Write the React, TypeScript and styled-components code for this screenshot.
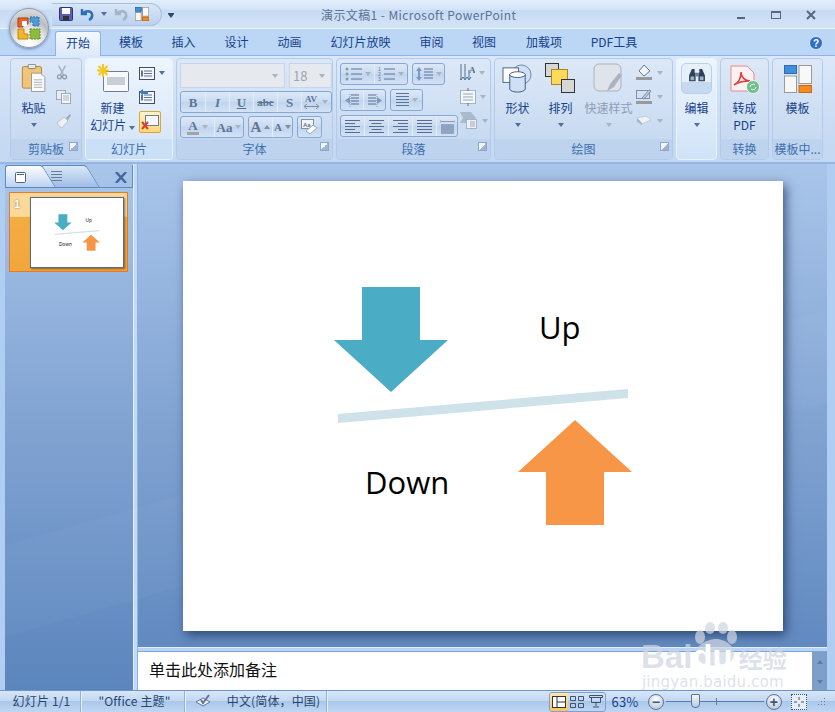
import React from "react";
import styled, { createGlobalStyle } from "styled-components";

const GlobalStyle = createGlobalStyle`
	html, body { margin: 0; padding: 0; background: #5b85bd; }
	* { box-sizing: border-box; }
`;

const INK = "#15428b";
const LABEL = "#3f6fae";
const FONT = `"Noto Sans CJK SC", "Noto Sans", sans-serif`;

const Window = styled.div`
	position: relative;
	width: 835px;
	height: 712px;
	overflow: hidden;
	display: flex;
	flex-direction: column;
	font: 12px/16px ${FONT};
	color: ${INK};
	background: #5b85bd;
`;

/* title bar */
const TitleBar = styled.div`
	flex: none;
	height: 29px;
	display: flex;
	align-items: center;
	padding: 2px 0 0 52px;
	border-bottom: 1px solid #eaf3fd;
	background: linear-gradient(#e3eefc 0, #d3e3f7 35%, #c6daf3 36%, #d5e5f8 100%);
`;
const Qat = styled.div`
	width: 110px;
	height: 23px;
	margin-top: -2px;
	display: flex;
	align-items: center;
	gap: 7px;
	padding-left: 7px;
	border-radius: 0 12px 12px 0;
	border: 1px solid #a9c0de;
	border-left: 0;
	background: linear-gradient(#d8e6f8, #bcd2ee);
`;
const QatMore = styled.span`
	width: 6px;
	margin-left: 6px;
	display: flex;
	flex-direction: column;
	gap: 1px;
	border-top: 1px solid #2f4a70;
`;
const TitleText = styled.div`
	flex: 1;
	padding-left: 147px;
	color: #5a7396;
	font-size: 12px;
	letter-spacing: 0.4px;
`;
const WinButtons = styled.div`
	display: flex;
	align-items: center;
	width: 99px;
	gap: 25px;
`;
const Orb = styled.div`
	position: absolute;
	left: 9px;
	top: 8px;
	width: 40px;
	height: 40px;
	border-radius: 50%;
	display: flex;
	align-items: center;
	justify-content: center;
	border: 1px solid #8e9bb0;
	box-shadow: 0 1px 3px rgba(40, 70, 120, 0.55);
	background: radial-gradient(circle at 50% 90%, #ffffff 0, #e6e6e6 40%, #b9bcc1 60%, #eceef0 100%);
`;

/* tabs */
const TabRow = styled.div`
	flex: none;
	height: 27px;
	padding-left: 55px;
	display: flex;
	align-items: flex-end;
	background: #bcd6f6;
	border-bottom: 1px solid #8db2e3;
`;
const Tab = styled.div<{ $w: number; $active?: boolean }>`
	width: ${p => p.$w}px;
	height: 25px;
	margin-bottom: -1px;
	text-align: center;
	line-height: 22px;
	font-size: 12px;
	color: ${INK};
	border-radius: 3px 3px 0 0;
	${p =>
		p.$active &&
		`border: 1px solid #8db2e3; border-bottom: 0; background: linear-gradient(#f3f8fe, #dde9f8);`}
`;
const Help = styled.span`
	margin: 0 0 5px auto;
	padding-right: 12px;
	display: flex;
`;

/* ribbon */
const Ribbon = styled.div`
	flex: none;
	height: 108px;
	display: flex;
	gap: 3px;
	padding: 2px 0 0 10px;
	background: linear-gradient(#dbe8f9, #c8dbf3 70%, #c3d8f2);
	border-bottom: 2px solid #96b6e0;
`;
const Group = styled.div<{ $w: number; $light?: boolean }>`
	width: ${p => p.$w}px;
	height: 102px;
	flex: none;
	display: flex;
	flex-direction: column;
	border: 1px solid ${p => (p.$light ? "#e9f3fe" : "#b3cbe8")};
	border-radius: 4px;
	overflow: hidden;
	background: ${p =>
		p.$light
			? "linear-gradient(#eef5fd, #d9e8f9 75%, #cfe3f7)"
			: "linear-gradient(#dce8f7, #c8daf1 80%)"};
`;
const GroupBody = styled.div`
	flex: 1;
	min-height: 0;
	display: flex;
`;
const GroupLabel = styled.div<{ $light?: boolean }>`
	flex: none;
	height: 20px;
	position: relative;
	text-align: center;
	line-height: 19px;
	color: ${LABEL};
	background: ${p => (p.$light ? "#c9e0f7" : "#bdd3ee")};
`;
const Launcher = styled.span`
	position: absolute;
	right: 3px;
	top: 3px;
	width: 9px;
	height: 9px;
	border: 1px solid #8ea8c9;
	background: linear-gradient(135deg, #f1f6fc 50%, #9db4d2 50%);
`;
const BigButton = styled.div<{ $w: number; $disabled?: boolean }>`
	width: ${p => p.$w}px;
	flex: none;
	display: flex;
	flex-direction: column;
	align-items: center;
	padding-top: 3px;
	color: ${p => (p.$disabled ? "#8d9db3" : INK)};
`;
const BigIcon = styled.div`
	height: 33px;
	display: flex;
	align-items: center;
	justify-content: center;
	margin-bottom: 4px;
`;
const EditBox = styled.div`
	width: 31px;
	height: 31px;
	display: flex;
	justify-content: center;
	padding-top: 5px;
	border: 1px solid #b9d0ea;
	border-radius: 5px;
	background: linear-gradient(#e6f0fb 0 62%, #c5d9f0 63%);
`;
const BigLine = styled.div`
	height: 17px;
	line-height: 17px;
	white-space: nowrap;
`;
const Caret = styled.span<{ $c?: string; $up?: boolean }>`
	display: inline-block;
	width: 0;
	height: 0;
	border: 3px solid transparent;
	${p =>
		p.$up
			? `border-bottom: 4px solid ${p.$c || "#4f6f9f"}; border-top: 0;`
			: `border-top: 4px solid ${p.$c || "#4f6f9f"}; border-bottom: 0;`}
`;
const CaretLine = styled.div`
	height: 17px;
	display: flex;
	align-items: center;
	justify-content: center;
`;
const SmallCol = styled.div`
	display: flex;
	flex-direction: column;
	gap: 5px;
	padding-top: 4px;
`;
const SmallItem = styled.div<{ $selected?: boolean }>`
	height: 19px;
	display: flex;
	align-items: center;
	gap: 4px;
	${p =>
		p.$selected &&
		`height: 22px; width: 22px; justify-content: center; border: 1px solid #d9a53f; border-radius: 2px;
		background: linear-gradient(#fff3c8, #ffd776);`}
`;
const Rows = styled.div<{ $gap: number; $pl: number }>`
	display: flex;
	flex-direction: column;
	gap: ${p => p.$gap}px;
	padding: 4px 0 0 ${p => p.$pl}px;
`;
const Row = styled.div`
	display: flex;
	gap: 4px;
`;
const Combo = styled.div<{ $w: number }>`
	width: ${p => p.$w}px;
	height: 25px;
	padding: 0 6px 0 3px;
	display: flex;
	align-items: center;
	justify-content: space-between;
	font-size: 13px;
	color: #9aa5b5;
	background: #e6e9ee;
	border: 1px solid #c7d5e8;
`;
const Strip = styled.div`
	height: 22px;
	display: flex;
	border: 1px solid #86a8d4;
	border-radius: 3px;
	overflow: hidden;
	background: linear-gradient(#dce8f7, #c9dbf1 50%, #c0d4ed 51%, #d3e2f5);
`;
const Tool = styled.div<{ $w: number }>`
	width: ${p => p.$w}px;
	height: 100%;
	display: flex;
	align-items: center;
	justify-content: center;
	gap: 3px;
	border-left: 1px solid #e3edf9;
	&:first-child {
		border-left: 0;
	}
`;
const Glyph = styled.span<{ $i?: boolean; $u?: boolean; $s?: boolean; $size?: number; $bar?: boolean }>`
	font: ${p => (p.$i ? "italic" : "normal")} bold ${p => p.$size || 13}px/1 "Liberation Serif", serif;
	color: #5d7594;
	text-decoration: ${p => (p.$u ? "underline" : p.$s ? "line-through" : "none")};
	${p => p.$bar && `border-bottom: 3px solid #a3a3a3; padding: 0 1px;`}
`;
const Stack = styled.span`
	display: flex;
	flex-direction: column;
	align-items: center;
`;
const ParaCol = styled.div`
	display: flex;
	flex-direction: column;
	gap: 5px;
	padding: 4px 0 0 2px;
`;

/* work area */
const Work = styled.div`
	flex: 1;
	min-height: 0;
	display: flex;
	border-left: 5px solid #b0cdf2;
	border-right: 8px solid #b0cdf2;
	background:
		linear-gradient(164deg, transparent 0 50%, rgba(255, 255, 255, 0.025) 50.2% 62%, transparent 62.2%),
		linear-gradient(#a9c5ea, #81a3d2 50%, #5b85bd);
`;
const SidePanel = styled.div`
	width: 128px;
	flex: none;
`;
const PanelTabs = styled.div`
	height: 23px;
	margin-top: 1px;
	display: flex;
	align-items: flex-end;
	border-bottom: 1px solid #5d8ac4;
	border-right: 1px solid #5d8ac4;
`;
const PanelTab = styled.div<{ $active?: boolean; $w: number }>`
	position: relative;
	z-index: ${p => (p.$active ? 2 : 1)};
	width: ${p => p.$w}px;
	height: 22px;
	padding: 4px 0 0 9px;
	border: 1px solid #5d8ac4;
	border-width: 1px 0 0 1px;
	border-radius: 3px 0 0 0;
	background: ${p =>
		p.$active ? "linear-gradient(#fbfdff, #bcd3f1)" : "linear-gradient(#dbe8f8, #9fbde6)"};
	&::after {
		content: "";
		position: absolute;
		z-index: -1;
		right: -8px;
		top: -1px;
		bottom: 0;
		width: 18px;
		border: 1px solid #5d8ac4;
		border-width: 1px 1px 0 0;
		border-radius: 0 3px 0 0;
		transform: skewX(32deg);
		background: ${p =>
			p.$active ? "linear-gradient(#fbfdff, #bcd3f1)" : "linear-gradient(#dbe8f8, #9fbde6)"};
	}
`;
const PanelClose = styled.span`
	margin: 0 5px 4px auto;
	display: flex;
`;
const Thumb = styled.div`
	width: 119px;
	height: 80px;
	margin: 4px 0 0 4px;
	display: flex;
	padding: 4px 0 0 20px;
	border: 1px solid #e8792b;
	background: linear-gradient(#fbd99b 0 30%, #f3ad43 31%, #f2a63c);
	position: relative;
`;
const ThumbNum = styled.span`
	position: absolute;
	left: 4px;
	top: 4px;
	color: #fff;
	font: bold 11px/14px "Liberation Sans", sans-serif;
	text-shadow: 0 0 2px #8a5a10;
`;
const ThumbSlide = styled.div`
	width: 94px;
	height: 71px;
	background: #fff;
	border: 1px solid #5a6a80;
	box-shadow: 1px 1px 2px rgba(60, 50, 30, 0.6);
	display: flex;
`;
const Splitter = styled.div`
	width: 5px;
	flex: none;
	background: #c3daf6;
	border-left: 1px solid #e4effc;
	border-right: 1px solid #8fb2e0;
`;
const MainCol = styled.div`
	flex: 1;
	min-width: 0;
	display: flex;
	flex-direction: column;
`;
const Stage = styled.div`
	flex: 1;
	min-height: 0;
	padding: 17px 0 0 45px;
`;
const Slide = styled.div`
	width: 600px;
	height: 450px;
	background: #fff;
	display: flex;
	box-shadow: 3px 4px 10px rgba(30, 50, 90, 0.75);
`;
const NotesSplit = styled.div`
	height: 5px;
	flex: none;
	background: #b9d3f4;
	border-top: 1px solid #e4effc;
	border-bottom: 1px solid #7ea5d8;
`;
const Notes = styled.div`
	height: 38px;
	flex: none;
	display: flex;
	background: #fff;
`;
const NotesText = styled.div`
	flex: 1;
	padding: 7px 0 0 11px;
	font-size: 16px;
	line-height: 20px;
	color: #111;
`;
const ScrollBar = styled.div`
	width: 15px;
	flex: none;
	display: flex;
	flex-direction: column;
	justify-content: space-between;
	align-items: center;
	padding: 8px 0 6px;
	background: #7f9fcb;
`;

/* status bar */
const StatusBar = styled.div`
	flex: none;
	height: 22px;
	display: flex;
	align-items: center;
	padding-right: 9px;
	font-size: 12px;
	line-height: 18px;
	letter-spacing: 0.15px;
	color: #27466f;
	border-top: 1px solid #6d95cb;
	background: linear-gradient(#d7e6f8, #c4d9f3 45%, #aac7ea 50%, #c0d7f3);
`;
const StatusCell = styled.div<{ $w: number }>`
	width: ${p => p.$w}px;
	height: 100%;
	flex: none;
	display: flex;
	align-items: center;
	justify-content: center;
	gap: 16px;
	padding: 0 0 2px 2px;
	border-right: 1px solid #e6f0fb;
	box-shadow: inset -1px 0 0 #93b2d9;
`;
const ViewGroup = styled.div`
	margin-left: auto;
	width: 57px;
	height: 20px;
	display: flex;
	border: 1px solid #7ea1cf;
	border-radius: 3px;
	overflow: hidden;
`;
const ViewBtn = styled.div<{ $on?: boolean }>`
	flex: 1;
	display: flex;
	align-items: center;
	justify-content: center;
	background: ${p => (p.$on ? "linear-gradient(#ffe7a6, #fdc35a)" : "transparent")};
`;
const Zoom = styled.span`
	width: 42px;
	text-align: center;
	padding-right: 4px;
	color: ${INK};
	font-size: 13px;
`;
const RoundBtn = styled.span`
	width: 16px;
	height: 16px;
	flex: none;
	border-radius: 50%;
	display: flex;
	align-items: center;
	justify-content: center;
	color: #3c5677;
	font: bold 14px/1 "Liberation Sans", sans-serif;
	border: 1px solid #5f7493;
	background: radial-gradient(circle at 50% 30%, #fff, #aebed3);
`;
const Track = styled.div`
	width: 98px;
	height: 1px;
	margin: 0 2px;
	background: #5d7da6;
	position: relative;
`;
const Tick = styled.span`
	position: absolute;
	left: 50px;
	top: -3px;
	width: 1px;
	height: 7px;
	background: #5d7da6;
`;
const Thumbler = styled.span`
	position: absolute;
	left: 25px;
	top: -7px;
	width: 9px;
	height: 14px;
	background: linear-gradient(#f4f7fb, #b9c9de);
	border: 1px solid #5d7595;
	border-radius: 1px 1px 4px 4px;
`;
const FitBtn = styled.span`
	width: 16px;
	height: 16px;
	flex: none;
	margin: 0 10px 0 9px;
	display: flex;
	border: 1px dotted #3d5674;
	background: #e7eef7;
`;

/* watermark */
const Watermark = styled.div`
	position: absolute;
	left: 641px;
	top: 622px;
	width: 155px;
	color: rgba(208, 214, 226, 0.72);
	pointer-events: none;
	display: flex;
	flex-direction: column;
	align-items: flex-start;
`;
const Paw = styled.span`
	position: absolute;
	left: 52px;
	top: 0;
	display: flex;
`;
const MarkLine = styled.div`
	position: relative;
	margin-top: 18px;
	display: flex;
	align-items: baseline;
	font: bold 33px/34px "Liberation Sans", sans-serif;
`;
const MarkDu = styled.span`
	color: #fff;
`;
const MarkCn = styled.span`
	margin-left: 6px;
	font: bold 24px/30px ${FONT};
`;
const MarkUrl = styled.div`
	font: 15px/16px "DejaVu Sans", sans-serif;
	letter-spacing: 0.2px;
	margin-left: 1px;
`;

/* icons */
const Lines = ({ n = 4, w = 16, c = "#5d7594", gap = 3 }: { n?: number; w?: number; c?: string; gap?: number }) => (
	<svg width={w} height={n * gap} viewBox={`0 0 ${w} ${n * gap}`}>
		{Array.from({ length: n }, (_, i) => (
			<rect key={i} x="0" y={i * gap} width={w} height="1" fill={c} />
		))}
	</svg>
);

const AlignLines = ({ kind }: { kind: "l" | "c" | "r" | "j" }) => {
	const widths = [15, 10, 15, 10, 15];
	return (
		<svg width="15" height="13" viewBox="0 0 15 13">
			{widths.map((w0, i) => {
				const w = kind === "j" ? 15 : w0;
				const x = kind === "l" || kind === "j" ? 0 : kind === "c" ? (15 - w) / 2 : 15 - w;
				return <rect key={i} x={x} y={i * 3} width={w} height="1" fill="#566f91" />;
			})}
		</svg>
	);
};

const Distribute = () => (
	<svg width="15" height="15" viewBox="0 0 15 15">
		<path d="M0 1v3M15 1v3M1 2.500h13" stroke="#8a9bb3" />
		<path d="M1 6h13M1 8h13M1 10h13M1 12h13M1 14h13" stroke="#566f91" />
	</svg>
);

const OfficeLogo = () => (
	<svg width="28" height="28" viewBox="0 0 28 28">
		<path d="M3 4h10v6H8v3H3z" fill="#e8642a" stroke="#b03c10" />
		<path d="M15 3h9v9h-6V8h-3z" fill="#4f9bd5" stroke="#2b6ea8" strokeDasharray="2 1" />
		<path d="M3 15h6v5h4v5H3z" fill="#f3b52c" stroke="#c4860e" />
		<path d="M15 15h10v10H15z" fill="#8dbb3f" stroke="#5f8a22" strokeDasharray="2 1" />
		<rect x="7" y="7" width="5" height="5" fill="#fff" />
	</svg>
);

const SaveIcon = () => (
	<svg width="14" height="14" viewBox="0 0 14 14">
		<rect x="0.5" y="0.5" width="13" height="13" rx="1" fill="#5a5fb5" stroke="#2e3277" />
		<rect x="3" y="1" width="8" height="6" fill="#fff" />
		<rect x="4" y="9" width="6" height="4" fill="#333" />
	</svg>
);

const UndoIcon = ({ c }: { c: string }) => (
	<svg width="14" height="14" viewBox="0 0 14 14">
		<path d="M2 2v5h5M3 6.500C5 3.500 11 3 12 7c.5 2.500-1 5-3 6" fill="none" stroke={c} strokeWidth="2.500" />
	</svg>
);

const LayoutIcon = ({ s = 14 }: { s?: number }) => (
	<svg width={s} height={s} viewBox="0 0 14 14">
		<rect x="0.25" y="0.25" width="6" height="4" fill="#3f8fde" stroke="#2b6ea8" strokeWidth={s > 14 ? 0.5 : 1} />
		<rect x="0.25" y="5.500" width="6" height="8.250" fill="#f8f8f8" stroke="#9a9a9a" strokeWidth={s > 14 ? 0.5 : 1} />
		<rect x="7.500" y="0.25" width="6.250" height="9" fill="#f8f8f8" stroke="#9a9a9a" strokeWidth={s > 14 ? 0.5 : 1} />
		<rect x="7.500" y="10.250" width="6.250" height="3.500" fill="#f58a1f" stroke="#c96a0c" strokeWidth={s > 14 ? 0.5 : 1} />
	</svg>
);

const HelpIcon = () => (
	<svg width="14" height="14" viewBox="0 0 14 14">
		<circle cx="7" cy="7" r="6.500" fill="#2f6fc4" stroke="#d5e4f7" />
		<text x="7" y="11" textAnchor="middle" fontSize="10" fontWeight="bold" fill="#fff" fontFamily="Liberation Sans">
			?
		</text>
	</svg>
);

const MinIcon = () => (
	<svg width="10" height="10" viewBox="0 0 10 10">
		<rect x="1" y="7" width="8" height="2" fill="#55687f" />
	</svg>
);
const RestoreIcon = () => (
	<svg width="10" height="10" viewBox="0 0 10 10">
		<rect x="0.5" y="1.500" width="9" height="7" fill="none" stroke="#55687f" />
		<rect x="0" y="1" width="10" height="2" fill="#55687f" />
	</svg>
);
const CloseIcon = () => (
	<svg width="10" height="10" viewBox="0 0 10 10">
		<path d="M1 1l8 8M9 1L1 9" stroke="#55687f" strokeWidth="2" />
	</svg>
);

const PasteIcon = () => (
	<svg width="28" height="30" viewBox="0 0 30 36">
		<rect x="1" y="3" width="23" height="26" rx="2" fill="#f2c477" stroke="#a97b35" />
		<rect x="8" y="0.5" width="9" height="5" rx="1" fill="#e9e9e9" stroke="#777" />
		<path d="M12 11h11l5 5v17H12z" fill="#fafafa" stroke="#8f8f8f" />
		<path d="M15 19h10M15 22h10M15 25h10M15 28h10" stroke="#9aa" />
	</svg>
);

const NewSlideIcon = () => (
	<svg width="32" height="30" viewBox="0 0 32 30">
		<rect x="6.500" y="7.500" width="25" height="20" rx="1" fill="#f7f9fc" stroke="#6e7f95" />
		<rect x="10" y="13" width="18" height="8" fill="#c9ced6" />
		<path d="M6 0v13M0 6.500h12M1.500 2l9 9M10.500 2l-9 9" stroke="#f6c81e" strokeWidth="2" />
	</svg>
);

const SmallSlide = ({ mark }: { mark?: "arrow" | "x" }) => (
	<svg width="16" height="15" viewBox="0 0 16 15">
		<rect x="0.5" y="2.500" width="15" height="12" fill="#f3f6fa" stroke="#3f4f66" />
		<path d="M5 6h8M5 8.500h8M5 11h8" stroke="#5d7594" />
		<rect x="2" y="5.500" width="2" height="6" fill="#5d7594" />
		{mark === "arrow" && <path d="M0 3l4-3v2h5v3H4v1z" fill="#3f79c9" />}
	</svg>
);

const DeleteSlide = () => (
	<svg width="18" height="17" viewBox="0 0 18 17">
		<rect x="4.500" y="1.500" width="13" height="10" fill="#f7f9fc" stroke="#6e7f95" />
		<path d="M1 8l6 7M7 8l-6 7" stroke="#dd3b2a" strokeWidth="2" />
	</svg>
);

const Cut = () => (
	<svg width="12" height="15" viewBox="0 0 14 16">
		<path d="M3 0l6 11M11 0L5 11" stroke="#a3afbf" strokeWidth="1.500" />
		<circle cx="4" cy="13" r="2.300" fill="none" stroke="#8e9caf" strokeWidth="1.500" />
		<circle cx="10" cy="13" r="2.300" fill="none" stroke="#8e9caf" strokeWidth="1.500" />
	</svg>
);
const Copy = () => (
	<svg width="15" height="14" viewBox="0 0 15 14">
		<rect x="0.5" y="0.5" width="9" height="9" fill="#e8edf4" stroke="#9aa9bc" />
		<rect x="5.500" y="3.500" width="9" height="10" fill="#f4f6f9" stroke="#9aa9bc" />
		<path d="M7 6h6M7 8h6M7 10h6" stroke="#a9b5c5" />
	</svg>
);
const Brush = () => (
	<svg width="16" height="16" viewBox="0 0 16 16">
		<path d="M1 10l7-6 4 4-6 7c-2-1-4-3-5-5z" fill="#eef0f3" stroke="#b6bfcb" />
		<path d="M10 5l4-4 1 1-3 5z" fill="#9aa6b6" />
	</svg>
);

const Eraser = () => (
	<svg width="17" height="16" viewBox="0 0 17 16">
		<rect x="0.500" y="0.500" width="12" height="9" fill="#f2f5f9" stroke="#7d8ea5" />
		<text x="2" y="7.500" fontSize="6" fontWeight="bold" fill="#5d7594" fontFamily="Liberation Sans">
			Aa
		</text>
		<path d="M5 12l7-6 4 3-7 6z" fill="#fff" stroke="#9aa9bc" />
	</svg>
);

const Bullets = ({ numbered }: { numbered?: boolean }) => (
	<svg width="17" height="14" viewBox="0 0 17 14">
		{[1, 6, 11].map((y, i) =>
			numbered ? (
				<text key={y} x="0" y={y + 3} fontSize="5" fill="#5d7594" fontFamily="Liberation Sans">
					{i + 1}
				</text>
			) : (
				<circle key={y} cx="2" cy={y + 1} r="1.500" fill="#8a99ad" />
			)
		)}
		<path d="M6 2h11M6 7h11M6 12h11" stroke="#5d7594" />
	</svg>
);

const Spacing = () => (
	<svg width="17" height="16" viewBox="0 0 17 16">
		<path d="M3 1l3 4H4v6h2l-3 4-3-4h2V5H0z" fill="#7b9ac3" />
		<path d="M8 3h9M8 6h9M8 9h9M8 12h9" stroke="#5d7594" />
	</svg>
);

const Indent = ({ flip }: { flip?: boolean }) => (
	<svg width="14" height="13" viewBox="0 0 14 13" style={flip ? { transform: "scaleX(-1)" } : undefined}>
		<path d="M0 6.500L5 3v7z" fill="#7b9ac3" />
		<path d="M6 1h8M6 4h8M6 7h8M6 10h8" stroke="#566f91" />
		<path d="M5 0v13" stroke="#8a9bb3" strokeDasharray="1 1" />
	</svg>
);

const TextDir = () => (
	<svg width="15" height="18" viewBox="0 0 15 18">
		<path d="M1 0v15M5 0v15M9 6v9" stroke="#56708f" />
		<path d="M-1 13l2 3 2-3M3 13l2 3 2-3M7 13l2 3 2-3" stroke="#56708f" fill="none" />
		<text x="9" y="9" fontSize="9" fontWeight="bold" fill="#56708f" fontFamily="Liberation Serif">
			A
		</text>
	</svg>
);

const AlignBox = () => (
	<svg width="16" height="18" viewBox="0 0 16 18">
		<rect x="0.5" y="2.500" width="15" height="13" fill="#f4f7fb" stroke="#a3b3c7" />
		<path d="M3 6h10M3 9h10M3 12h10" stroke="#96a7bd" />
		<path d="M8 0v3M8 15v3" stroke="#5d7594" />
	</svg>
);

const SmartArt = () => (
	<svg width="18" height="18" viewBox="0 0 18 18">
		<path d="M0 0h11l5 6-5 5H0l3-5z" fill="#aab9cc" />
		<rect x="6.500" y="7.500" width="10" height="9" fill="#eef2f7" stroke="#a3b3c7" />
		<path d="M10 10h5M10 12h5M10 14h5" stroke="#9aa9bc" />
	</svg>
);

const Shapes = () => (
	<svg width="31" height="29" viewBox="0 0 32 30">
		<circle cx="20" cy="11" r="10" fill="#cfe0f4" stroke="#6d89ad" />
		<rect x="1" y="4" width="16" height="15" fill="#fff" stroke="#4f6074" />
		<path d="M8 11h16v15c-1 4-15 4-16 0z" fill="#cde0f6" stroke="#3d5a82" />
		<ellipse cx="16" cy="11" rx="8" ry="3" fill="#fff" stroke="#3d5a82" />
	</svg>
);

const Arrange = () => (
	<svg width="31" height="31" viewBox="0 0 31 31">
		<rect x="0.5" y="0.5" width="13" height="13" fill="#d7d7d7" stroke="#333" />
		<rect x="6.500" y="6.500" width="16" height="15" fill="#ffd95a" stroke="#a58a20" />
		<rect x="16.500" y="16.500" width="13" height="13" fill="#d7d7d7" stroke="#333" />
	</svg>
);

const QuickStyle = () => (
	<svg width="32" height="31" viewBox="0 0 32 31">
		<rect x="1" y="1" width="27" height="27" rx="5" fill="#dfe4ea" stroke="#a8b1bc" />
		<path d="M14 28l3-7 9-11 3 2-8 12z" fill="#aab3bf" />
	</svg>
);

const Fill = () => (
	<svg width="17" height="15" viewBox="0 0 17 15">
		<path d="M8 0l6 6-6 5-5-5z" fill="#f0f3f7" stroke="#66788f" />
		<rect x="0" y="12" width="16" height="3" fill="#9a9a9a" />
	</svg>
);
const Outline = () => (
	<svg width="17" height="15" viewBox="0 0 17 15">
		<rect x="0.5" y="1.500" width="13" height="8" fill="none" stroke="#7d8ea5" />
		<path d="M6 9l7-8 2 1-7 8z" fill="#c3ccd8" stroke="#7d8ea5" />
		<rect x="0" y="12" width="16" height="3" fill="#9a9a9a" />
	</svg>
);
const Effect = () => (
	<svg width="17" height="15" viewBox="0 0 17 15">
		<path d="M1 5l9-2 5 4-9 4z" fill="#eef1f5" stroke="#c3cdd9" />
		<path d="M1 5v4l5 3V10z" fill="#a9b6c6" />
	</svg>
);

const Binoculars = () => (
	<svg width="16" height="14" viewBox="0 0 17 15">
		<path d="M3 0h3v4h1v9H0V7zM11 0h3l3 7v6h-7V4h1z" fill="#2f3f5c" />
		<rect x="7" y="4" width="3" height="4" fill="#6d7f9a" />
		<rect x="1.500" y="8" width="4" height="4" fill="#9bb0cc" />
		<rect x="11.500" y="8" width="4" height="4" fill="#9bb0cc" />
	</svg>
);

const PdfIcon = () => (
	<svg width="30" height="28" viewBox="0 0 30 28" overflow="visible">
		<path d="M1 1h16l7 7v18H1z" fill="#fdf2f1" stroke="#e48a88" />
		<path d="M4 20c4-2 7-7 7-13 0 5 4 9 9 9-5 0-12 1-16 4z" fill="none" stroke="#e63a36" strokeWidth="1.500" />
		<circle cx="23" cy="22" r="6.500" fill="#6fbf8a" stroke="#eef6f0" />
		<path d="M20 22a3 3 0 0 1 5-2M26 22a3 3 0 0 1-5 2" stroke="#fff" fill="none" />
	</svg>
);

const CloseX = () => (
	<svg width="12" height="11" viewBox="0 0 12 11">
		<path d="M1 0l10 11M11 0L1 11" stroke="#43689c" strokeWidth="2.500" />
	</svg>
);

const SlideArt = ({ w, h }: { w: number; h: number }) => (
	<svg width={w} height={h} viewBox="0 0 600 450">
		<path d="M179 106h58v53h28l-57 52-57-52h28z" fill="#4bacc6" />
		<path d="M155 233l290-25v9l-290 25z" fill="#cfe2ea" />
		<path d="M392 239l57 52h-28v53h-58v-53h-28z" fill="#f79646" />
		<text x="356" y="158" fontSize="31" fontFamily="'Open Sans', sans-serif" fill="#000">
			Up
		</text>
		<text x="182" y="313" fontSize="31" fontFamily="'Open Sans', sans-serif" fill="#000">
			Down
		</text>
	</svg>
);

const tabs: [string, number][] = [
	["模板", 60],
	["插入", 45],
	["设计", 61],
	["动画", 45],
	["幻灯片放映", 97],
	["审阅", 45],
	["视图", 60],
	["加载项", 60],
	["PDF工具", 80],
];

export default function App() {
	return (
		<Window>
			<GlobalStyle />
			<TitleBar>
				<Qat>
					<SaveIcon />
					<UndoIcon c="#2f6fb5" />
					<Caret />
					<UndoIcon c="#a4b3c6" />
					<LayoutIcon />
				</Qat>
				<QatMore>
					<Caret $c="#2f4a70" />
				</QatMore>
				<TitleText>演示文稿1 - Microsoft PowerPoint</TitleText>
				<WinButtons>
					<MinIcon />
					<RestoreIcon />
					<CloseIcon />
				</WinButtons>
			</TitleBar>
			<Orb>
				<OfficeLogo />
			</Orb>
			<TabRow>
				<Tab $w={46} $active>
					开始
				</Tab>
				{tabs.map(([t, w]) => (
					<Tab key={t} $w={w}>
						{t}
					</Tab>
				))}
				<Help>
					<HelpIcon />
				</Help>
			</TabRow>
			<Ribbon>
				<Group $w={72}>
					<GroupBody>
						<BigButton $w={45}>
							<BigIcon>
								<PasteIcon />
							</BigIcon>
							<BigLine>粘贴</BigLine>
							<CaretLine>
								<Caret />
							</CaretLine>
						</BigButton>
						<SmallCol>
							<SmallItem>
								<Cut />
							</SmallItem>
							<SmallItem>
								<Copy />
							</SmallItem>
							<SmallItem>
								<Brush />
							</SmallItem>
						</SmallCol>
					</GroupBody>
					<GroupLabel>
						剪贴板
						<Launcher />
					</GroupLabel>
				</Group>
				<Group $w={88} $light>
					<GroupBody>
						<BigButton $w={53}>
							<BigIcon>
								<NewSlideIcon />
							</BigIcon>
							<BigLine>新建</BigLine>
							<BigLine>
								幻灯片 <Caret />
							</BigLine>
						</BigButton>
						<SmallCol>
							<SmallItem>
								<SmallSlide />
								<Caret />
							</SmallItem>
							<SmallItem>
								<SmallSlide mark="arrow" />
							</SmallItem>
							<SmallItem $selected>
								<DeleteSlide />
							</SmallItem>
						</SmallCol>
					</GroupBody>
					<GroupLabel $light>幻灯片</GroupLabel>
				</Group>
				<Group $w={157}>
					<GroupBody>
						<Rows $gap={3} $pl={3}>
							<Row>
								<Combo $w={105}>
									<span />
									<Caret $c="#a9b3c0" />
								</Combo>
								<Combo $w={43}>
									18
									<Caret $c="#a9b3c0" />
								</Combo>
							</Row>
							<Strip>
								<Tool $w={24}>
									<Glyph>B</Glyph>
								</Tool>
								<Tool $w={24}>
									<Glyph $i>I</Glyph>
								</Tool>
								<Tool $w={24}>
									<Glyph $u>U</Glyph>
								</Tool>
								<Tool $w={24}>
									<Glyph $s $size={11}>
										abc
									</Glyph>
								</Tool>
								<Tool $w={24}>
									<Glyph>S</Glyph>
								</Tool>
								<Tool $w={28}>
									<Stack>
										<Glyph $size={9}>AV</Glyph>
										<svg width="15" height="5" viewBox="0 0 15 5">
											<path d="M0 2.500h15M3 0L0 2.500 3 5M12 0l3 2.500L12 5" fill="none" stroke="#7d8ea5" />
										</svg>
									</Stack>
									<Caret $c="#a9b3c0" />
								</Tool>
							</Strip>
							<Row>
								<Strip>
									<Tool $w={33}>
										<Glyph $size={13} $bar>
											A
										</Glyph>
										<Caret $c="#a9b3c0" />
									</Tool>
									<Tool $w={29}>
										<Glyph>Aa</Glyph>
										<Caret $c="#a9b3c0" />
									</Tool>
								</Strip>
								<Strip>
									<Tool $w={23}>
										<Glyph $size={15}>A</Glyph>
										<Caret $up $c="#7d8ea5" />
									</Tool>
									<Tool $w={20}>
										<Glyph $size={11}>A</Glyph>
										<Caret $c="#7d8ea5" />
									</Tool>
								</Strip>
								<Strip>
									<Tool $w={23}>
										<Eraser />
									</Tool>
								</Strip>
							</Row>
						</Rows>
					</GroupBody>
					<GroupLabel>
						字体
						<Launcher />
					</GroupLabel>
				</Group>
				<Group $w={155}>
					<GroupBody>
						<Rows $gap={4} $pl={3}>
							<Row>
								<Strip>
									<Tool $w={33}>
										<Bullets />
										<Caret $c="#a9b3c0" />
									</Tool>
									<Tool $w={33}>
										<Bullets numbered />
										<Caret $c="#a9b3c0" />
									</Tool>
								</Strip>
								<Strip>
									<Tool $w={31}>
										<Spacing />
										<Caret $c="#a9b3c0" />
									</Tool>
								</Strip>
							</Row>
							<Row>
								<Strip>
									<Tool $w={22}>
										<Indent />
									</Tool>
									<Tool $w={22}>
										<Indent flip />
									</Tool>
								</Strip>
								<Strip>
									<Tool $w={31}>
										<Lines n={5} w={13} />
										<Caret $c="#a9b3c0" />
									</Tool>
								</Strip>
							</Row>
							<Strip>
								<Tool $w={23}>
									<AlignLines kind="l" />
								</Tool>
								<Tool $w={24}>
									<AlignLines kind="c" />
								</Tool>
								<Tool $w={24}>
									<AlignLines kind="r" />
								</Tool>
								<Tool $w={24}>
									<AlignLines kind="j" />
								</Tool>
								<Tool $w={21}>
									<Distribute />
								</Tool>
							</Strip>
						</Rows>
						<ParaCol>
							<SmallItem>
								<TextDir />
								<Caret $c="#a9b3c0" />
							</SmallItem>
							<SmallItem>
								<AlignBox />
								<Caret $c="#a9b3c0" />
							</SmallItem>
							<SmallItem>
								<SmartArt />
								<Caret $c="#a9b3c0" />
							</SmallItem>
						</ParaCol>
					</GroupBody>
					<GroupLabel>
						段落
						<Launcher />
					</GroupLabel>
				</Group>
				<Group $w={179}>
					<GroupBody>
						<BigButton $w={45}>
							<BigIcon>
								<Shapes />
							</BigIcon>
							<BigLine>形状</BigLine>
							<CaretLine>
								<Caret />
							</CaretLine>
						</BigButton>
						<BigButton $w={41}>
							<BigIcon>
								<Arrange />
							</BigIcon>
							<BigLine>排列</BigLine>
							<CaretLine>
								<Caret />
							</CaretLine>
						</BigButton>
						<BigButton $w={55} $disabled>
							<BigIcon>
								<QuickStyle />
							</BigIcon>
							<BigLine>快速样式</BigLine>
							<CaretLine>
								<Caret $c="#a9b3c0" />
							</CaretLine>
						</BigButton>
						<SmallCol>
							<SmallItem>
								<Fill />
								<Caret $c="#a9b3c0" />
							</SmallItem>
							<SmallItem>
								<Outline />
								<Caret $c="#a9b3c0" />
							</SmallItem>
							<SmallItem>
								<Effect />
								<Caret $c="#a9b3c0" />
							</SmallItem>
						</SmallCol>
					</GroupBody>
					<GroupLabel>
						绘图
						<Launcher />
					</GroupLabel>
				</Group>
				<Group $w={41} $light>
					<GroupBody>
						<BigButton $w={39}>
							<BigIcon>
								<EditBox>
									<Binoculars />
								</EditBox>
							</BigIcon>
							<BigLine>编辑</BigLine>
							<CaretLine>
								<Caret />
							</CaretLine>
						</BigButton>
					</GroupBody>
				</Group>
				<Group $w={49}>
					<GroupBody>
						<BigButton $w={47}>
							<BigIcon>
								<PdfIcon />
							</BigIcon>
							<BigLine>转成</BigLine>
							<BigLine>PDF</BigLine>
						</BigButton>
					</GroupBody>
					<GroupLabel>转换</GroupLabel>
				</Group>
				<Group $w={51}>
					<GroupBody>
						<BigButton $w={49}>
							<BigIcon>
								<LayoutIcon s={28} />
							</BigIcon>
							<BigLine>模板</BigLine>
						</BigButton>
					</GroupBody>
					<GroupLabel>模板中...</GroupLabel>
				</Group>
			</Ribbon>
			<Work>
				<SidePanel>
					<PanelTabs>
						<PanelTab $active $w={36}>
							<svg width="11" height="11" viewBox="0 0 11 11">
								<rect x="0.5" y="0.5" width="10" height="10" rx="1" fill="#fff" stroke="#55657a" />
								<path d="M2 2.500h7" stroke="#55657a" />
							</svg>
						</PanelTab>
						<PanelTab $w={44}>
							<Lines n={4} w={11} c="#6a7c96" gap={3} />
						</PanelTab>
						<PanelClose>
							<CloseX />
						</PanelClose>
					</PanelTabs>
					<Thumb>
						<ThumbNum>1</ThumbNum>
						<ThumbSlide>
							<SlideArt w={92} h={69} />
						</ThumbSlide>
					</Thumb>
				</SidePanel>
				<Splitter />
				<MainCol>
					<Stage>
						<Slide>
							<SlideArt w={600} h={450} />
						</Slide>
					</Stage>
					<NotesSplit />
					<Notes>
						<NotesText>单击此处添加备注</NotesText>
						<ScrollBar>
							<Caret $up $c="#5d7da6" />
							<Caret $c="#5d7da6" />
						</ScrollBar>
					</Notes>
				</MainCol>
			</Work>
			<StatusBar>
				<StatusCell $w={82}>幻灯片 1/1</StatusCell>
				<StatusCell $w={104}>"Office 主题"</StatusCell>
				<StatusCell $w={142}>
					<svg width="16" height="14" viewBox="0 0 16 14">
						<path d="M1 8l7-4 7 4-7 4z" fill="#eef2f8" stroke="#5f7698" />
						<path d="M6 6l2 3 6-8" fill="none" stroke="#5f7698" strokeWidth="2" />
					</svg>
					中文(简体，中国)
				</StatusCell>
				<ViewGroup>
					<ViewBtn $on>
						<svg width="14" height="12" viewBox="0 0 14 12">
							<rect x="0.5" y="0.5" width="13" height="11" fill="#fff" stroke="#333" />
							<path d="M5 0v12M5 6h9" stroke="#333" />
						</svg>
					</ViewBtn>
					<ViewBtn>
						<svg width="14" height="12" viewBox="0 0 14 12">
							<path d="M.5.5h5v4h-5zM8.500.5h5v4h-5zM.5 7.500h5v4h-5zM8.500 7.500h5v4h-5z" fill="none" stroke="#40506a" />
						</svg>
					</ViewBtn>
					<ViewBtn>
						<svg width="14" height="13" viewBox="0 0 14 13">
							<path d="M.5.5h13v2h-13zM2.500 2.500h9v5h-9zM7 8v3M4 12h6" fill="none" stroke="#40506a" />
						</svg>
					</ViewBtn>
				</ViewGroup>
				<Zoom>63%</Zoom>
				<RoundBtn>−</RoundBtn>
				<Track>
					<Tick />
					<Thumbler />
				</Track>
				<RoundBtn>+</RoundBtn>
				<FitBtn>
					<svg width="14" height="14" viewBox="0 0 14 14">
						<path d="M7 2v3M7 9v3M2 7h3M9 7h3" stroke="#3d5674" />
					</svg>
				</FitBtn>
				<svg width="9" height="9" viewBox="0 0 9 9">
					<path d="M7 1h1v1H7zM4 4h1v1H4zM7 4h1v1H7zM1 7h1v1H1zM4 7h1v1H4zM7 7h1v1H7z" fill="#5d7da6" />
				</svg>
			</StatusBar>
			<Watermark>
				<Paw>
					<svg width="46" height="46" viewBox="0 0 46 46" fill="currentColor">
						<ellipse cx="7" cy="15" rx="5" ry="7" />
						<ellipse cx="17" cy="6" rx="5" ry="6" />
						<ellipse cx="30" cy="6" rx="5" ry="6" />
						<ellipse cx="39" cy="15" rx="5" ry="7" />
						<path d="M23 17c7 0 18 5 18 15 0 9-10 13-18 11C15 45 3 41 3 32c0-10 13-15 20-15z" />
					</svg>
				</Paw>
				<MarkLine>
					Bai<MarkDu>du</MarkDu>
					<MarkCn>经验</MarkCn>
				</MarkLine>
				<MarkUrl>jingyan.baidu.com</MarkUrl>
			</Watermark>
		</Window>
	);
}
